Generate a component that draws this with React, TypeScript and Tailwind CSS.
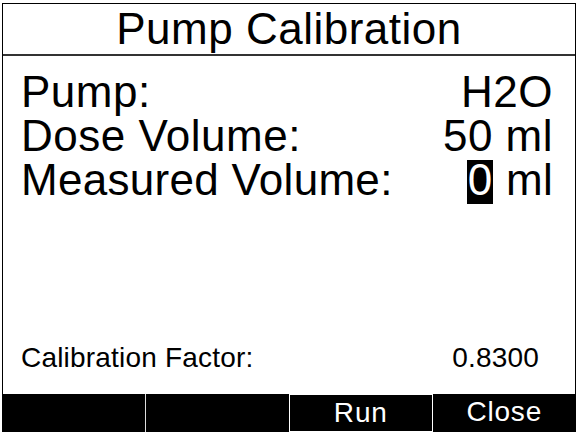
export default function App() {
    const font = { fontFamily: '"Liberation Sans", Arial, sans-serif' };

    return (
        <div className="w-[579px] h-[436px] bg-white pl-[2px] pt-[3px] text-black" style={font}>
            <div className="w-[574px] h-[429px] border border-b-0 border-black flex flex-col">
                {/* title */}
                <div className="h-[52px] shrink-0 border-b-2 border-[#333] flex items-center justify-center text-[44px] leading-[44px] tracking-[0.5px]">
                    Pump Calibration
                </div>

                {/* values */}
                <div className="flex-1 flex flex-col pt-[14px] pl-[18px]">
                    <div className="flex justify-between pr-[22px] text-[44px] leading-[44px] tracking-[0.5px]">
                        <span>Pump:</span>
                        <span>H2O</span>
                    </div>
                    <div className="flex justify-between pr-[22px] text-[44px] leading-[44px] tracking-[0.5px]">
                        <span>Dose Volume:</span>
                        <span>50 ml</span>
                    </div>
                    <div className="flex justify-between pr-[22px] text-[44px] leading-[44px] tracking-[0.3px]">
                        <span>Measured Volume:</span>
                        <span>
                            <span className="inline-block bg-black text-white px-[1px] leading-[40px] pb-[4px] -mb-[4px]">0</span> ml
                        </span>
                    </div>
                    <div className="mt-auto mb-[22px] flex justify-between pr-[36px] text-[28px] leading-[28px] tracking-[0.2px]">
                        <span>Calibration Factor:</span>
                        <span>0.8300</span>
                    </div>
                </div>

                {/* soft keys */}
                <div className="h-[38px] shrink-0 bg-black grid grid-cols-4 text-white text-[28px] leading-[36px] tracking-[0.8px] -mx-px">
                    <div className="border-r border-[#ddd]"></div>
                    <div></div>
                    <div className="border border-white text-center">Run</div>
                    <div className="text-center">Close</div>
                </div>
            </div>
        </div>
    );
}
